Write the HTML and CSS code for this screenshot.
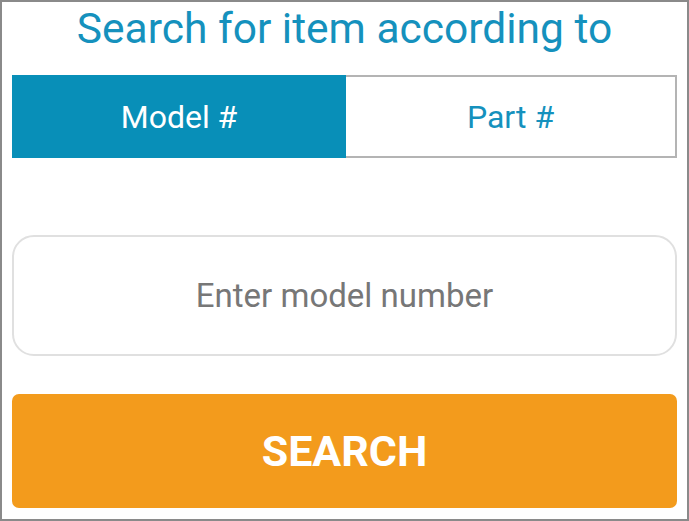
FILE: index.html
```html
<!DOCTYPE html>
<html lang="en">
<head>
	<meta charset="utf-8">
	<title>Search</title>
	<link rel="stylesheet" href="styles.css">
</head>
<body>
	<div id="search-box">
		<h1 class="title">Search for item according to</h1>
		<div class="tabs">
			<span class="tab on">Model #</span>
			<span class="tab">Part #</span>
		</div>
		<input class="query" type="text" placeholder="Enter model number">
		<button class="search-btn">SEARCH</button>
	</div>
</body>
</html>
```

FILE: styles.css
```css
* {
	margin: 0;
	padding: 0;
	box-sizing: border-box;
}
body {
	font-family: Roboto, "Liberation Sans", sans-serif;
	background: #fff;
}
#search-box {
	display: flex;
	flex-direction: column;
	width: 689px;
	height: 521px;
	padding: 0 10px;
	border: 2px solid #8a8a8a;
}
.title {
	margin-top: 2px;
	height: 71px;
	font-size: 42.5px;
	font-weight: normal;
	line-height: 50px;
	text-align: center;
	color: #1591bd;
}
.tabs {
	display: flex;
	height: 83px;
}
.tab {
	flex: 1;
	display: flex;
	align-items: center;
	justify-content: center;
	font-size: 32px;
	color: #1591bd;
	border: 2px solid #b4b4b4;
	border-left: none;
}
.tab.on {
	flex: 0 0 334px;
	color: #fff;
	background: #088fb8;
	border: none;
}
.query {
	margin-top: 77px;
	height: 121px;
	border: 2px solid #e0e0e0;
	border-radius: 22px;
	font-family: inherit;
	font-size: 33px;
	text-align: center;
	outline: none;
}
.query::placeholder {
	color: #777;
}
.search-btn {
	margin-top: 38px;
	height: 114px;
	border: none;
	border-radius: 7px;
	background: #f39b1c;
	color: #fff;
	font-family: inherit;
	font-size: 43px;
	font-weight: bold;
}
```
